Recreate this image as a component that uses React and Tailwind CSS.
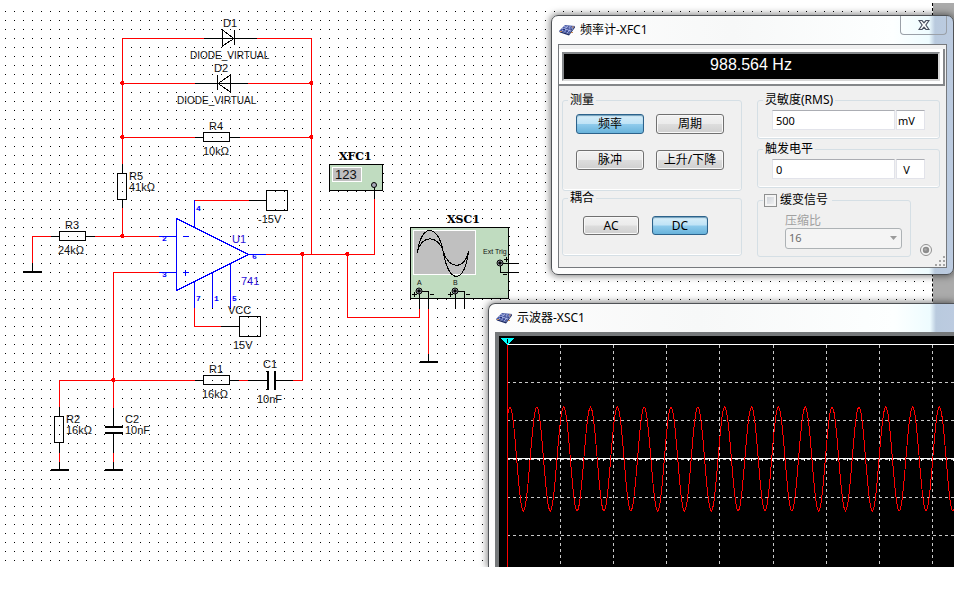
import React, { useState } from 'react';
import clsx from 'clsx';

const RED = '#ff0000';
const BLACK = '#000000';
const BLUE = '#0000ff';

// [colour, path]
const wires = [
  // feedback diodes and R4
  [RED, 'M122.5 38.5H204M257 38.5H311.5V254.5M122.5 38V164'],
  [BLACK, 'M204 38.5H257M234.5 30V45M222.5 30V46L234 38.5Z'],
  [RED, 'M122 83.5H195M248 83.5H311'],
  [BLACK, 'M195 83.5H248M217.5 75V90M230.5 75V92L218 83.5Z'],
  [RED, 'M122 137.5H195M240 137.5H311'],
  [BLACK, 'M195 137.5H203M230 137.5H240M203.5 132.5H229.5V141.5H203.5Z'],
  // R5, R3 and ground
  [BLACK, 'M122.5 164V173M122.5 200V208M117.5 173.5H126.5V199.5H117.5Z'],
  [RED, 'M122.5 208V236M32.5 263V236.5H51M95 236.5H159'],
  [BLACK, 'M51 236.5H59M86 236.5H95M59.5 231.5H85.5V240.5H59.5ZM32.5 263V271'],
  // op-amp
  [BLUE, 'M176.5 218.5V290.5L248.5 254.5ZM159 236.5H176M159 272.5H176M248 254.5H266'],
  [BLUE, 'M194.5 200V227M194.5 281V308M212.5 272V308M230.5 263V308M183 236.5H189M183 272.5H189M185.5 270V276'],
  [RED, 'M194.5 200.5H249M194.5 308V326.5H221M266 254.5H374.5V199'],
  [BLACK, 'M249 200.5H266M221 326.5H239M266.5 190.5H287.5V210.5H266.5ZM239.5 316.5H260.5V336.5H239.5Z'],
  // R1, C1
  [RED, 'M159 272.5H113.5V408M302.5 254V380.5H293M239 380.5H248M195 380.5H59.5V407'],
  [BLACK, 'M195 380.5H203M230 380.5H239M248 380.5H267M276 380.5H293M203.5 375.5H229.5V384.5H203.5Z'],
  // R2, C2
  [BLACK, 'M59.5 407V416M59.5 443V453M59.5 462V469M54.5 416.5H63.5V442.5H54.5Z'],
  [BLACK, 'M113.5 408V426M113.5 434V453M113.5 462V469'],
  [RED, 'M59.5 453V462M113.5 453V462'],
  // scope leads
  [RED, 'M347.5 254V317.5H419.5V309M428.5 309V354'],
  [BLACK, 'M428.5 354V361'],
];

const plates = [
  'M23 272H42', 'M51 470H69', 'M105 470H123', 'M420 362H438',
  'M105 427H123', 'M105 433H123', 'M268 371V390', 'M275 371V390',
];

const junctions = [
  [122, 83], [311, 83], [122, 137], [311, 137], [122, 236],
  [302, 254], [347, 254], [113, 380],
];

const labels = [
  [223, 27, 'D1'], [214, 72, 'D2'], [209, 130, 'R4'], [203, 155, '10kΩ'],
  [129, 180, 'R5'], [129, 191, '41kΩ'], [65, 229, 'R3'], [58, 254, '24kΩ'],
  [258, 223, '-15V'], [228, 314, 'VCC'], [233, 349, '15V'], [209, 373, 'R1'],
  [202, 398, '16kΩ'], [263, 368, 'C1'], [257, 403, '10nF'], [66, 423, 'R2'],
  [66, 434, '16kΩ'], [125, 423, 'C2'], [125, 434, '10nF'],
];

const pins = [
  [162, 241, '2'], [162, 277, '3'], [196, 211, '4'], [252, 259, '6'],
  [196, 301, '7'], [214, 301, '1'], [232, 301, '5'],
];

const Terminal = ({ x, y }) => (
  <g>
    <circle cx={x} cy={y} r="3" fill="#a8a8b8" stroke="#000" />
    <circle cx={x} cy={y} r="1.8" fill="#000" />
  </g>
);

const Schematic = () => (
  <svg className="absolute inset-0 w-full h-full" fill="none" shapeRendering="crispEdges" role="img" aria-label="Schematic">
    <defs>
      <pattern id="grid" width="9" height="9" patternUnits="userSpaceOnUse">
        <rect x="5" y="2" width="1" height="1" fill="#000" />
      </pattern>
    </defs>
    <rect x="0" y="5" width="930" height="100%" fill="url(#grid)" />

    {wires.map(([color, d]) => <path key={d} d={d} stroke={color} />)}
    {plates.map((d) => <path key={d} d={d} stroke="#000" strokeWidth="2" />)}
    {junctions.map(([x, y]) => (
      <path key={`${x}-${y}`} d={`M${x - 2} ${y - 1}h1v-1h3v4h-3v-1h-1z`} fill={RED} />
    ))}

    {/* frequency counter */}
    <rect x="329.5" y="164.5" width="53" height="26" fill="#c0dcc0" stroke="#000" />
    <rect x="332.5" y="167.5" width="29" height="14" fill="#c0c0c0" stroke="#fff" />
    <path d="M374.5 185V199" stroke="#000" />
    <circle cx="374" cy="185" r="2.5" fill="#a8a8b8" stroke="#000" shapeRendering="auto" />

    {/* oscilloscope */}
    <rect x="410.5" y="227.5" width="98" height="71" fill="#c0dcc0" stroke="#000" />
    <rect x="413.5" y="230.5" width="62" height="44" fill="#c0c0c0" stroke="#fff" />
    <path d="M417.5 253C420 225 438 221 443.5 253S465 284 468.5 251" stroke="#000" />
    <path d="M417.5 252C421 235 438 234 443.5 252S465 270 468.5 251" stroke="#000" />
    <path d="M419.5 291V309M419 291.5H428.5V309M455.5 291V308M455 291.5H464.5V308M500 263.5H519M500.5 263V272.5H519" stroke="#000" />
    <path d="M412 294.5h5M414.5 292v5M430 294.5h4M448 294.5h5M450.5 292v5M466 294.5h4M504 259.5h5M506.5 257v5M503 274.5h4" stroke="#000" />
    <g shapeRendering="auto">
      <Terminal x={419} y={291} />
      <Terminal x={455} y={291} />
      <Terminal x={500} y={263} />
    </g>

    <g fill="#111" fontFamily="'Liberation Sans', sans-serif" fontSize="11">
      {labels.map(([x, y, text]) => <text key={`${x}-${y}`} x={x} y={y}>{text}</text>)}
      <text x="190" y="59" fontSize="10">DIODE_VIRTUAL</text>
      <text x="177" y="104" fontSize="10">DIODE_VIRTUAL</text>
      <text x="335" y="179" fontSize="13">123</text>
      <text x="483" y="254" fontSize="7">Ext Trig</text>
      <text x="417" y="285" fontSize="7">A</text>
      <text x="453" y="285" fontSize="7">B</text>
      <text x="232" y="243" fill="#2a10d8">U1</text>
      <text x="241" y="285" fill="#2a10d8">741</text>
    </g>
    <g fill={BLUE} fontFamily="'Liberation Mono', monospace" fontSize="8" fontWeight="bold">
      {pins.map(([x, y, text]) => <text key={text} x={x} y={y}>{text}</text>)}
    </g>
    <g fill="#000" fontFamily="'DejaVu Serif', serif" fontSize="11" fontWeight="bold">
      <text x="339" y="160">XFC1</text>
      <text x="447" y="223">XSC1</text>
    </g>
  </svg>
);

const AppIcon = () => (
  <svg width="16" height="12" viewBox="0 0 16 12" aria-hidden="true">
    <path d="M0 7 6 1l10 1-6 8z" fill="#4a5ba6" />
    <path d="M0 7l10 3v1.5L1 8.5zM10 10l6-8v1.5l-6 8z" fill="#1d2a63" />
    <path d="M3 7l6-5M5.500 8l6-6M8 9l6-6.500M3 4.500l9 2.500M5 2.500l9 2.500" stroke="#b9c3ee" strokeWidth=".8" />
    <path d="M4 5.500h2M8 4h2M7 7h2M11 5h2" stroke="#232f78" />
    <path d="M1 7.500h2M12 8.500h2M13 3h2" stroke="#c78a55" />
  </svg>
);

const GLASS =
  'bg-[linear-gradient(to_right,#fdfdfd_0,#f7f8f8_45%,#fdffff_calc(100%-60px),#eefcff_calc(100%-24px),#b9cade_calc(100%-18px),#bccbe0_100%)]';

const TitleBar = ({ title, children }) => (
  <header className="flex items-center justify-between h-7 pl-px">
    <h2 className="flex items-center gap-[5px] text-[12px] leading-4 text-black">
      <AppIcon />
      <span>{title}</span>
    </h2>
    {children}
  </header>
);

const ToolButton = ({ active, className, ...props }) => (
  <button
    type="button"
    aria-pressed={active}
    className={clsx(
      'rounded-[3px] border text-[12px] leading-4 text-black text-center',
      active
        ? 'border-[#2c628b] bg-[linear-gradient(to_bottom,#d8eef9_0,#bfe3f6_48%,#8fcbec_52%,#68b3db_100%)] shadow-[inset_0_1px_1px_#6f9db8]'
        : 'border-[#707070] bg-[linear-gradient(to_bottom,#f2f2f2_0,#ebebeb_48%,#dddddd_52%,#cfcfcf_100%)] shadow-[inset_0_0_0_1px_#f8f8f8]',
      className
    )}
    {...props}
  />
);

const Group = ({ title, children }) => (
  <fieldset className="rounded-[3px] border border-[#d5dfe5] shadow-[inset_0_-1px_0_#fff]">
    <legend className="ml-[5px] px-0.5 text-[12px] leading-3">{title}</legend>
    {children}
  </fieldset>
);

const ValueField = ({ title, value, unit, onChange }) => (
  <Group title={title}>
    <div className="flex gap-px pt-1 pb-2 pl-3.5 text-[11px]">
      <input
        aria-label={title}
        value={value}
        onChange={(e) => onChange(e.target.value)}
        className="w-[123px] h-5 px-[3px] bg-white border border-[#e2e3ea] border-t-[#abadb3]"
      />
      <input
        aria-label={`${title} ${unit}`}
        value={unit}
        readOnly
        className="w-[29px] h-5 pr-2 text-center bg-white border border-[#e2e3ea] border-t-[#abadb3]"
      />
    </div>
  </Group>
);

const FrequencyCounter = () => {
  const [mode, setMode] = useState('频率');
  const [coupling, setCoupling] = useState('DC');
  const [sensitivity, setSensitivity] = useState('500');
  const [trigger, setTrigger] = useState('0');
  const [slow, setSlow] = useState(false);

  return (
    <section className={clsx('absolute left-[551px] top-[15px] w-[403px] px-1.5 pb-1.5 rounded-[7px] border border-[#4f5256] shadow-[0_0_7px_1px_rgba(0,0,0,0.5)]', GLASS)}>
      <TitleBar title="频率计-XFC1">
        <button type="button" aria-label="Close" className="self-start flex items-center justify-center w-[47px] h-[19px] rounded-b-[4px] border border-t-0 border-[#9aa0a8]">
          <svg width="12" height="10" viewBox="0 0 12 10" aria-hidden="true">
            <path d="M1 .5h3l2 2.300 2-2.300h3L7.900 5 11 9.500H8L6 7.200 4 9.500H1L4.100 5z" fill="#fff" stroke="#4a5060" strokeWidth="1.200" />
          </svg>
        </button>
      </TitleBar>

      <div className="relative border border-[#76797d] bg-[#f0f0f0] pt-1 pb-2.5">
        <div className="mr-px p-[3px] bg-white border-r-2 border-b-2 border-[#85878a]">
          <output className="block h-[29px] border-2 border-[#85888b] border-b-[#d8d8d8] border-r-[#d8d8d8] bg-black text-center text-white text-[16px] leading-[22px] font-['Liberation_Sans',sans-serif]">
            988.564 Hz
          </output>
        </div>

        <div className="flex justify-between pl-[3px] pr-1.5 pt-2">
          <div className="flex flex-col gap-px w-[180px]">
            <Group title="测量">
              <div className="grid grid-cols-[68px_68px] gap-x-3 gap-y-4 pt-2 pb-5 pl-[13px]">
                {['频率', '周期', '脉冲', '上升/下降'].map((name) => (
                  <ToolButton key={name} active={mode === name} onClick={() => setMode(name)} className="h-5">
                    {name}
                  </ToolButton>
                ))}
              </div>
            </Group>
            <Group title="耦合">
              <div className="flex gap-[13px] pt-3 pb-5 pl-5">
                {['AC', 'DC'].map((name) => (
                  <ToolButton key={name} active={coupling === name} onClick={() => setCoupling(name)} className="w-14 h-[19px]">
                    {name}
                  </ToolButton>
                ))}
              </div>
            </Group>
          </div>

          <div className="flex flex-col gap-1 w-[183px]">
            <ValueField title="灵敏度(RMS)" value={sensitivity} unit="mV" onChange={setSensitivity} />
            <ValueField title="触发电平" value={trigger} unit="V" onChange={setTrigger} />
            <div className="flex items-end justify-between pt-px">
              <fieldset className="w-[154px] rounded-[3px] border border-[#d5dfe5]">
                <legend className="ml-[5px] pl-px pr-1">
                  <label className="flex items-center gap-[3px] text-[12px] leading-[14px]">
                    <input
                      type="checkbox"
                      checked={slow}
                      onChange={(e) => setSlow(e.target.checked)}
                      className="appearance-none w-[13px] h-[13px] border border-[#8e8f8f] bg-[linear-gradient(135deg,#c8cdd4,#f6f6f6)] shadow-[inset_0_0_0_2px_#f4f4f4] checked:bg-[#3c7fb1]"
                    />
                    缓变信号
                  </label>
                </legend>
                <div className="pt-1.5 pb-[7px] pl-[27px]">
                  <label htmlFor="ratio" className="block text-[12px] leading-[15px] text-[#a0a0a0]">压缩比</label>
                  <div className="relative w-[117px]">
                    <select
                      id="ratio"
                      disabled={!slow}
                      className="appearance-none block w-full h-[21px] pl-[3px] rounded-[3px] border border-[#adb2b5] bg-[#f4f4f4] text-[11px] text-[#6d6d6d] opacity-100"
                    >
                      <option>16</option>
                    </select>
                    <svg className="absolute right-[5px] top-2 pointer-events-none" width="7" height="4" aria-hidden="true">
                      <path d="M0 0h7L3.500 4z" fill="#9a9a9a" />
                    </svg>
                  </div>
                </div>
              </fieldset>
              <svg className="mr-[7px]" width="14" height="14" viewBox="0 0 14 14" aria-hidden="true">
                <circle cx="7" cy="7" r="5.500" fill="#f4f4f4" stroke="#909090" />
                <circle cx="7" cy="7" r="3.200" fill="#8c8c8c" />
                <circle cx="6.500" cy="6.500" r="1.300" fill="#aaa" />
              </svg>
            </div>
          </div>
        </div>

        <svg className="absolute right-px bottom-px" width="10" height="10" aria-hidden="true">
          <path d="M8 0h2v2H8zM4 4h2v2H4zM8 4h2v2H8zM0 8h2v2H0zM4 8h2v2H4zM8 8h2v2H8z" fill="#a5a5a5" />
        </svg>
      </div>
    </section>
  );
};

// trace: amplitude and period in screen pixels
const trace = Array.from({ length: 1800 }, (_, x) => {
  const y = 123 - 52 * Math.cos(((x - 2.5) * 2 * Math.PI) / 26.84);
  return `${x + 8.5},${y.toFixed(1)}`;
}).join(' ');

const columns = Array.from({ length: 34 }, (_, i) => Math.round(8 + (i + 1) * 53.1));

const Oscilloscope = () => (
  <section className={clsx('absolute left-[488px] top-[303px] right-0 bottom-0 flex flex-col pl-1.5 rounded-tl-[7px] border-t border-l border-[#4f5256] shadow-[0_0_7px_1px_rgba(0,0,0,0.5)]', GLASS)}>
    <TitleBar title="示波器-XSC1" />
    <div className="flex-1 min-h-0 border-t-4 border-l-4 border-[#75787a] bg-black">
      <svg className="block w-full h-full" fill="none" shapeRendering="crispEdges" role="img" aria-label="Channel A">
        <g stroke="#c8c8c8" strokeDasharray="3 3">
          {columns.map((x) => <path key={x} d={`M${x + 0.5} 9V1200`} />)}
          {[46, 84, 123, 161, 199, 237].map((y) => <path key={y} d={`M8 ${y + 0.5}H2000`} />)}
        </g>
        <path d="M8 8.500H2000M9 122.500H2000" stroke="#fff" />
        <path d="M19 124H2000" stroke="#fff" strokeWidth="2" strokeDasharray="1 9.600" />
        <polyline points={trace} stroke={RED} />
        <path d="M8.500 9V1200" stroke={RED} />
        <path d="M2 2h13L8.500 9z" fill="#00ffff" />
        <path d="M8.500 3v4" stroke="#000" />
      </svg>
    </div>
  </section>
);

export default function App() {
  return (
    <div className="flex h-screen bg-white pr-[13px] pb-[47px] font-['Noto_Sans','Noto_Sans_CJK_SC',sans-serif] text-black">
      <main className="relative flex-1 flex overflow-hidden">
        <div className="flex-1 mt-[3px] border-r border-dashed border-black" />
        <div className="w-[21px] mt-[3px] bg-[#ababab]" />
        <Schematic />
        <FrequencyCounter />
        <Oscilloscope />
      </main>
    </div>
  );
}
